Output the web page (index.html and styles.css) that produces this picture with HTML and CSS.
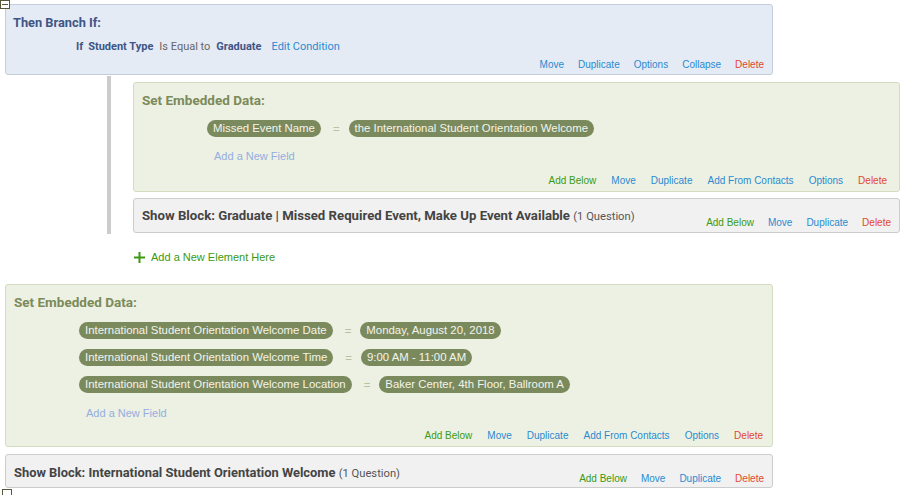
FILE: index.html
```html
<!DOCTYPE html>
<html>
<head>
<meta charset="utf-8">
<link rel="stylesheet" href="styles.css">
</head>
<body>
<div class="flow">
  <span class="toggle toggle-top"></span>
  <div class="block branch">
    <div class="title">Then Branch If:</div>
    <div class="cond">
      <b>If</b><b>Student Type</b><span class="op">Is Equal to</span><b>Graduate</b><a class="edit">Edit Condition</a>
    </div>
    <div class="links">
      <a>Move</a><a>Duplicate</a><a>Options</a><a>Collapse</a><a class="del">Delete</a>
    </div>
  </div>

  <div class="nested">
    <div class="block embed e1">
      <div class="title">Set Embedded Data:</div>
      <div class="fields">
        <div class="field"><span class="pill">Missed Event Name</span><span class="eq">=</span><span class="pill">the International Student Orientation Welcome</span></div>
      </div>
      <div class="addfield">Add a New Field</div>
      <div class="links">
        <a class="add">Add Below</a><a>Move</a><a>Duplicate</a><a>Add From Contacts</a><a>Options</a><a class="del">Delete</a>
      </div>
    </div>
    <div class="block show">
      <div class="stitle">Show Block: Graduate | Missed Required Event, Make Up Event Available <span class="count">(1 Question)</span></div>
      <div class="links">
        <a class="add">Add Below</a><a>Move</a><a>Duplicate</a><a class="del">Delete</a>
      </div>
    </div>
  </div>

  <div class="newel"><svg class="plus" width="11" height="11" viewBox="0 0 11 11"><path d="M5.5 0V11M0 5.5H11" stroke="#3a9a12" stroke-width="2"/></svg>Add a New Element Here</div>

  <div class="block embed e2">
    <div class="title">Set Embedded Data:</div>
    <div class="fields">
      <div class="field"><span class="pill">International Student Orientation Welcome Date</span><span class="eq">=</span><span class="pill">Monday, August 20, 2018</span></div>
      <div class="field"><span class="pill">International Student Orientation Welcome Time</span><span class="eq">=</span><span class="pill">9:00 AM - 11:00 AM</span></div>
      <div class="field"><span class="pill">International Student Orientation Welcome Location</span><span class="eq">=</span><span class="pill">Baker Center, 4th Floor, Ballroom A</span></div>
    </div>
    <div class="addfield">Add a New Field</div>
    <div class="links">
      <a class="add">Add Below</a><a>Move</a><a>Duplicate</a><a>Add From Contacts</a><a>Options</a><a class="del">Delete</a>
    </div>
  </div>
  <div class="block show s2">
    <div class="stitle">Show Block: International Student Orientation Welcome <span class="count">(1 Question)</span></div>
    <div class="links">
      <a class="add">Add Below</a><a>Move</a><a>Duplicate</a><a class="del">Delete</a>
    </div>
  </div>
  <span class="toggle toggle-bottom"></span>
</div>
</body>
</html>
```

FILE: styles.css
```css
html, body {
  margin: 0;
  padding: 0;
  background: #ffffff;
  font-family: "Liberation Sans", Arial, sans-serif;
}

.flow {
  position: relative;
  padding: 4px 0 0 5px;
  width: 895px;
}

.toggle {
  display: block;
  box-sizing: border-box;
  width: 10px;
  height: 9px;
  border: 1px solid #57573a;
  background: #ffffff;
}

.toggle-top {
  position: absolute;
  left: 0;
  top: 0;
  z-index: 2;
}

.toggle-top::after {
  content: "";
  display: block;
  margin: 3px 1px 0;
  height: 1px;
  background: #57573a;
}

.toggle-bottom {
  margin: 1px 0 0 -3px;
  height: 8px;
  border-bottom: none;
}

.block {
  box-sizing: border-box;
  width: 768px;
  border: 1px solid;
  border-radius: 3px;
}

.title {
  font-family: Roboto, "Liberation Sans", sans-serif;
  font-weight: bold;
  font-size: 13px;
  line-height: 16px;
}

.links {
  display: flex;
  justify-content: flex-end;
  gap: 15px;
  font-size: 10px;
  line-height: 14px;
}

.links a { color: #2a8ad0; }
.links a.add { color: #3a9a12; }
.links a.del { color: #e1472f; }

/* branch */
.branch {
  background: #e5ebf5;
  border-color: #c4cddc;
  padding: 10px 8px 3px 7px;
  height: 71px;
}

.branch .title { color: #3e5585; font-size: 12.8px; }

.cond {
  margin: 8px 0 0 63px;
  font-family: Roboto, "Liberation Sans", sans-serif;
  font-size: 11px;
  line-height: 16px;
  color: #666666;
  display: flex;
  gap: 5px;
}

.cond b { color: #3e5585; }
.cond .op { margin: 0 1px; }
.cond .edit { color: #2a8ad0; margin-left: 5px; }

.branch .links { margin-top: 3px; gap: 14px; }

/* nested branch contents */
.nested {
  margin: 1px 0 0 102px;
  border-left: 4px solid #cccccc;
  padding: 6px 0 1px 22px;
}

.nested .block { width: 767px; }

/* embedded data */
.embed {
  background: #edf1e3;
  border-color: #d4dcbf;
  padding: 9px 12px 3px 8px;
}

.embed .title { color: #7b8a5a; font-size: 13.5px; }

.fields {
  margin: 12px 0 0 65px;
  display: flex;
  flex-direction: column;
  gap: 10px;
}

.field {
  display: flex;
  align-items: center;
  font-size: 11.4px;
}

.pill {
  background: #7b8a5c;
  color: #f3f4ec;
  height: 17px;
  line-height: 17px;
  padding: 0 6px;
  border-radius: 9px;
}

.eq {
  color: #b8c1a0;
  margin: 0 9px 0 12px;
}

.addfield {
  margin: 11px 0 0 72px;
  font-size: 11px;
  line-height: 16px;
  color: #93ade0;
}

.e1 .links { margin-top: 10px; }

.e2 { margin-top: 19px; padding-right: 9px; }
.e2 .addfield { margin-top: 12px; }
.e2 .links { margin-top: 8px; }

/* show block */
.show {
  background: #f1f1f1;
  border-color: #cccccc;
  padding: 9px 8px 2px 8px;
  display: flex;
  justify-content: space-between;
  align-items: flex-start;
  margin-top: 6px;
}

.stitle {
  font-family: Roboto, "Liberation Sans", sans-serif;
  font-weight: bold;
  font-size: 13.2px;
  line-height: 16px;
  color: #444444;
}

.count {
  font-weight: normal;
  font-size: 11.2px;
  color: #555555;
}

.show .links { margin-top: 8px; gap: 14px; }

.s2 { margin-top: 7px; padding-top: 10px; padding-bottom: 1px; }
.s2 .stitle { font-size: 12.9px; }
.s2 .links { margin-top: 7px; }

/* add new element */
.newel {
  margin: 15px 0 0 129px;
  font-size: 11px;
  line-height: 16px;
  color: #3a9a12;
  display: flex;
  align-items: center;
}

.plus {
  margin-right: 6px;
}
```
